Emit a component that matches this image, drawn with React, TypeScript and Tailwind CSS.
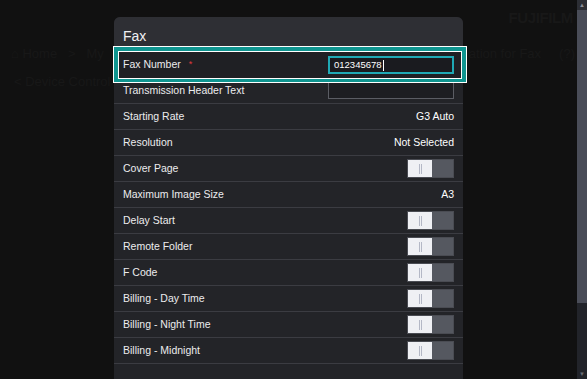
const font = "font-['Liberation_Sans',Arial,sans-serif]";

type Row = { label: string; kind: "text" | "toggle" | "input"; value?: string };

const rows: Row[] = [
  { label: "Transmission Header Text", kind: "input" },
  { label: "Starting Rate", kind: "text", value: "G3 Auto" },
  { label: "Resolution", kind: "text", value: "Not Selected" },
  { label: "Cover Page", kind: "toggle" },
  { label: "Maximum Image Size", kind: "text", value: "A3" },
  { label: "Delay Start", kind: "toggle" },
  { label: "Remote Folder", kind: "toggle" },
  { label: "F Code", kind: "toggle" },
  { label: "Billing - Day Time", kind: "toggle" },
  { label: "Billing - Night Time", kind: "toggle" },
  { label: "Billing - Midnight", kind: "toggle" },
];

const Toggle = () => (
  <div className="flex h-[19px] w-[47px] border border-[#4a4c53]">
    <div className="flex w-[24px] items-center justify-center gap-[1px] bg-[#eff0f4]">
      <span className="h-[10px] w-[1px] bg-[#b4b8c6]"></span>
      <span className="h-[10px] w-[1px] bg-[#b4b8c6]"></span>
    </div>
    <div className="flex-1 bg-[#555860]"></div>
  </div>
);

export default function App() {
  return (
    <div className={`${font} flex h-[379px] w-[587px] overflow-hidden bg-[#111111]`}>
      <div className="relative flex-1">
        {/* dimmed page behind the dialog */}
        <div className="flex flex-col text-[#181818]">
          <div className="flex h-[36px] items-center justify-end pr-[4px]">
            <span className="text-[15px] font-bold tracking-tight">FUJIFILM</span>
          </div>
          <div className="flex h-[36px] items-center justify-between pl-[11px] pr-[2px] text-[13px]">
            <span>⌂ Home &nbsp; &gt; &nbsp; My</span>
            <span>ation for Fax &nbsp;&nbsp;&nbsp; (?)</span>
          </div>
          <div className="flex h-[20px] items-center pl-[14px] text-[13px]">
            <span>&lt; Device Control P</span>
          </div>
        </div>

        {/* dialog */}
        <div className="absolute bottom-0 left-[114px] top-[17px] flex w-[349px] flex-col rounded-t-[6px] bg-[#232428]">
          <div className="flex h-[35px] items-center rounded-t-[6px] bg-[#2e2f34] px-[9px] pt-[3px]">
            <span className="text-[14px] text-[#f0f0f2]">Fax</span>
          </div>

          <div className="relative flex h-[26px] items-center justify-between bg-[#1f2024] px-[9px]">
            <div className="flex items-center gap-[8px] text-[10.5px] text-[#ececee]">
              <span>Fax Number</span>
              <span className="-mt-[2px] text-[9px] leading-[9px] text-[#e0393e]">*</span>
            </div>
            <div className="flex h-[18px] w-[126px] items-center border-2 border-[#1fa9b5] bg-[#1a1b1f] px-[4px] text-[9.5px] text-white">
              <span>012345678</span>
              <span className="ml-[1px] h-[11px] w-[1px] bg-white"></span>
            </div>
            <div className="pointer-events-none absolute -bottom-[5px] -left-[1px] -right-[4px] -top-[6px] border border-white">
              <div className="h-full border-4 border-[#0f9590] border-b-[3px]">
                <div className="h-full border border-white"></div>
              </div>
            </div>
          </div>

          {rows.map((row) => (
            <div
              key={row.label}
              className="flex h-[26px] items-center justify-between border-b border-[#3b3c42] px-[9px] text-[10.5px] text-[#ececee]"
            >
              <span>{row.label}</span>
              {row.kind === "text" && <span className="text-white">{row.value}</span>}
              {row.kind === "toggle" && <Toggle />}
              {row.kind === "input" && (
                <div className="h-[17px] w-[126px] border border-[#5b5d64] bg-[#1d1e22]"></div>
              )}
            </div>
          ))}
        </div>
      </div>

      {/* scrollbar */}
      <div className="flex w-[10px] flex-col bg-[#22242a]">
        <div className="flex h-[10px] items-center justify-center bg-[#2c2e34] text-[6px] text-[#8a8d96]">▲</div>
        <div className="h-[293px] bg-[#4a4d58]"></div>
        <div className="flex-1"></div>
        <div className="flex h-[10px] items-center justify-center text-[6px] text-[#6a6d76]">▼</div>
      </div>
    </div>
  );
}
